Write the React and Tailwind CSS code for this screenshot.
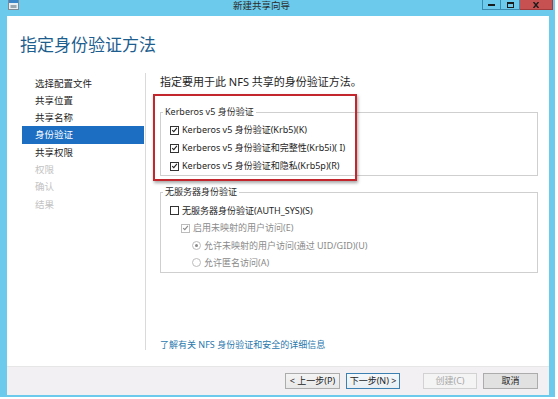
import React from 'react';

const navItems = [
  { label: '选择配置文件' },
  { label: '共享位置' },
  { label: '共享名称' },
  { label: '身份验证', active: true },
  { label: '共享权限' },
  { label: '权限', disabled: true },
  { label: '确认', disabled: true },
  { label: '结果', disabled: true },
];

const CheckBox = ({ checked, disabled }) => (
  <span
    className={
      disabled
        ? 'w-[9px] h-[9px] border border-[#bcbcbc] bg-white flex items-center justify-center shrink-0'
        : 'w-[9px] h-[9px] border border-[#333] bg-white flex items-center justify-center shrink-0'
    }
  >
    {checked && (
      <svg viewBox="0 0 9 9" className="w-[8px] h-[8px]">
        <path
          d="M1.5 4.6 L3.6 6.7 L7.6 1.8"
          fill="none"
          stroke={disabled ? '#8a8a8a' : '#222'}
          strokeWidth="1.4"
        />
      </svg>
    )}
  </span>
);

const Radio = ({ checked }) => (
  <span className="w-[9px] h-[9px] rounded-full border border-[#bcbcbc] bg-white flex items-center justify-center shrink-0">
    {checked && <span className="w-[3px] h-[3px] rounded-full bg-[#8a8a8a]" />}
  </span>
);

const App = () => {
  return (
    <div className="w-[558px] h-[399px] bg-white overflow-hidden relative font-['Noto_Sans','Noto_Sans_CJK_SC',sans-serif] text-[#1e1e1e]">
      <div className="w-[555px] h-[397px] bg-[#6ccbec] flex flex-col">
        {/* title bar */}
        <div className="h-[16px] flex items-start shrink-0">
          <svg viewBox="0 0 11 10" className="ml-[8px] w-[11px] h-[10px]">
            <rect x="0.5" y="0" width="10" height="9.5" fill="#e9eef2" stroke="#7d8a96" />
            <rect x="1" y="0" width="9" height="3" fill="#3a86c8" />
            <rect x="2.5" y="5" width="6" height="3" fill="#9aa6b0" />
          </svg>
          <span className="ml-[214px] text-[9.5px] leading-[11px] text-[#2b2b2b]">新建共享向导</span>
          <div className="ml-auto mr-[2px] flex h-[10px]">
            <div className="w-[19px] h-full border border-t-0 border-[#3a8db0] flex items-center justify-center">
              <span className="w-[7px] h-[2px] bg-[#1b1b1b] mt-[1px]" />
            </div>
            <div className="w-[19px] h-full border border-t-0 border-l-0 border-[#3a8db0] flex items-center justify-center">
              <span className="w-[7px] h-[6px] border border-[#1b1b1b] border-t-2" />
            </div>
            <div className="w-[33px] h-full bg-[#c75050] border border-t-0 border-l-0 border-[#a13a3a] flex items-center justify-center">
              <svg viewBox="0 0 8 6" className="w-[8px] h-[6px]">
                <path d="M1.5 0 L6.5 6 M6.5 0 L1.5 6" stroke="#1b1b1b" strokeWidth="1.4" />
              </svg>
            </div>
          </div>
        </div>

        {/* client area */}
        <div className="flex-1 ml-[7px] mr-[6px] mb-[2px] bg-white flex flex-col">
          <div className="h-[50px] shrink-0 pl-[13px] pt-[19px]">
            <h1 className="text-[17px] leading-[20px] text-[#1d5e8f]">指定身份验证方法</h1>
          </div>

          <div className="flex-1 flex min-h-0">
            {/* left nav */}
            <div className="w-[139px] shrink-0 mt-[7px] mb-[16px] border-r border-[#dadada] pl-[15px] pr-[1px] pt-[1.5px]">
              {navItems.map((item) => (
                <div
                  key={item.label}
                  className={
                    item.active
                      ? 'h-[17.3px] leading-[17.3px] pl-[13px] text-[9.5px] bg-[#1b6ec2] text-white'
                      : item.disabled
                      ? 'h-[17.3px] leading-[17.3px] pl-[13px] text-[9.5px] text-[#c3c3c3]'
                      : 'h-[17.3px] leading-[17.3px] pl-[13px] text-[9.5px] text-[#1e1e1e]'
                  }
                >
                  {item.label}
                </div>
              ))}
            </div>

            {/* content */}
            <div className="flex-1 flex flex-col pl-[14px] pr-[11px] pt-[8px]">
              <p className="text-[11px] leading-[16px] text-[#1e1e1e]">指定要用于此 NFS 共享的身份验证方法。</p>

              <fieldset className="mt-[16px] border border-[#cfcfcf]">
                <legend className="ml-[2px] px-[2px] text-[9px] leading-[12px] text-[#2b2b2b]">Kerberos v5 身份验证</legend>
                <div className="pt-[3px]">
                  <div className="h-[18px] flex items-center gap-[3px] pl-[9px] text-[9px]">
                    <CheckBox checked />
                    <span>Kerberos v5 身份验证(Krb5)(K)</span>
                  </div>
                  <div className="h-[18px] flex items-center gap-[3px] pl-[9px] text-[9px]">
                    <CheckBox checked />
                    <span>Kerberos v5 身份验证和完整性(Krb5i)( I)</span>
                  </div>
                  <div className="h-[18px] flex items-center gap-[3px] pl-[9px] text-[9px]">
                    <CheckBox checked />
                    <span>Kerberos v5 身份验证和隐私(Krb5p)(R)</span>
                  </div>
                </div>
              </fieldset>

              <fieldset className="mt-[10px] border border-[#cfcfcf]">
                <legend className="ml-[2px] px-[2px] text-[9px] leading-[12px] text-[#2b2b2b]">无服务器身份验证</legend>
                <div className="pt-[4px]">
                  <div className="h-[17.4px] flex items-center gap-[3px] pl-[9px] text-[9px]">
                    <CheckBox />
                    <span>无服务器身份验证(AUTH_SYS)(S)</span>
                  </div>
                  <div className="h-[17.4px] flex items-center gap-[3px] pl-[20px] text-[9px] text-[#8a8a8a]">
                    <CheckBox checked disabled />
                    <span>启用未映射的用户访问(E)</span>
                  </div>
                  <div className="h-[17.4px] flex items-center gap-[3px] pl-[31px] text-[9px] text-[#8a8a8a]">
                    <Radio checked />
                    <span>允许未映射的用户访问(通过 UID/GID)(U)</span>
                  </div>
                  <div className="h-[17.4px] flex items-center gap-[3px] pl-[31px] text-[9px] text-[#8a8a8a]">
                    <Radio />
                    <span>允许匿名访问(A)</span>
                  </div>
                </div>
              </fieldset>

              <a className="mt-auto mb-[15px] text-[9px] leading-[12px] text-[#2a78ad]">了解有关 NFS 身份验证和安全的详细信息</a>
            </div>
          </div>

          {/* footer */}
          <div className="h-[29px] shrink-0 bg-[#f3f0f4] border-t border-[#e6e6e6] flex items-center justify-end pr-[11px] text-[9px]">
            <button className="w-[55px] h-[16px] border border-[#acacac] bg-gradient-to-b from-[#f4f4f4] to-[#e8e8e8] text-[#1e1e1e] leading-[14px]">&lt; 上一步(P)</button>
            <button className="ml-[6px] w-[54px] h-[16px] border border-[#3c7fb1] bg-gradient-to-b from-[#f4f8fb] to-[#e8eef3] text-[#1e1e1e] leading-[14px]">下一步(N) &gt;</button>
            <button className="ml-[23px] w-[54px] h-[16px] border border-[#d2d2d2] bg-[#f4f4f4] text-[#a6a6a6] leading-[14px]">创建(C)</button>
            <button className="ml-[6px] w-[55px] h-[16px] border border-[#acacac] bg-[#e1e1e1] text-[#1e1e1e] leading-[14px]">取消</button>
          </div>
        </div>
      </div>

      {/* red annotation box */}
      <div className="absolute left-[153px] top-[94px] w-[204px] h-[87px] border-2 border-[#c4262e] shadow-[1px_2px_3px_rgba(0,0,0,0.35)]" />
    </div>
  );
};

export default App;
